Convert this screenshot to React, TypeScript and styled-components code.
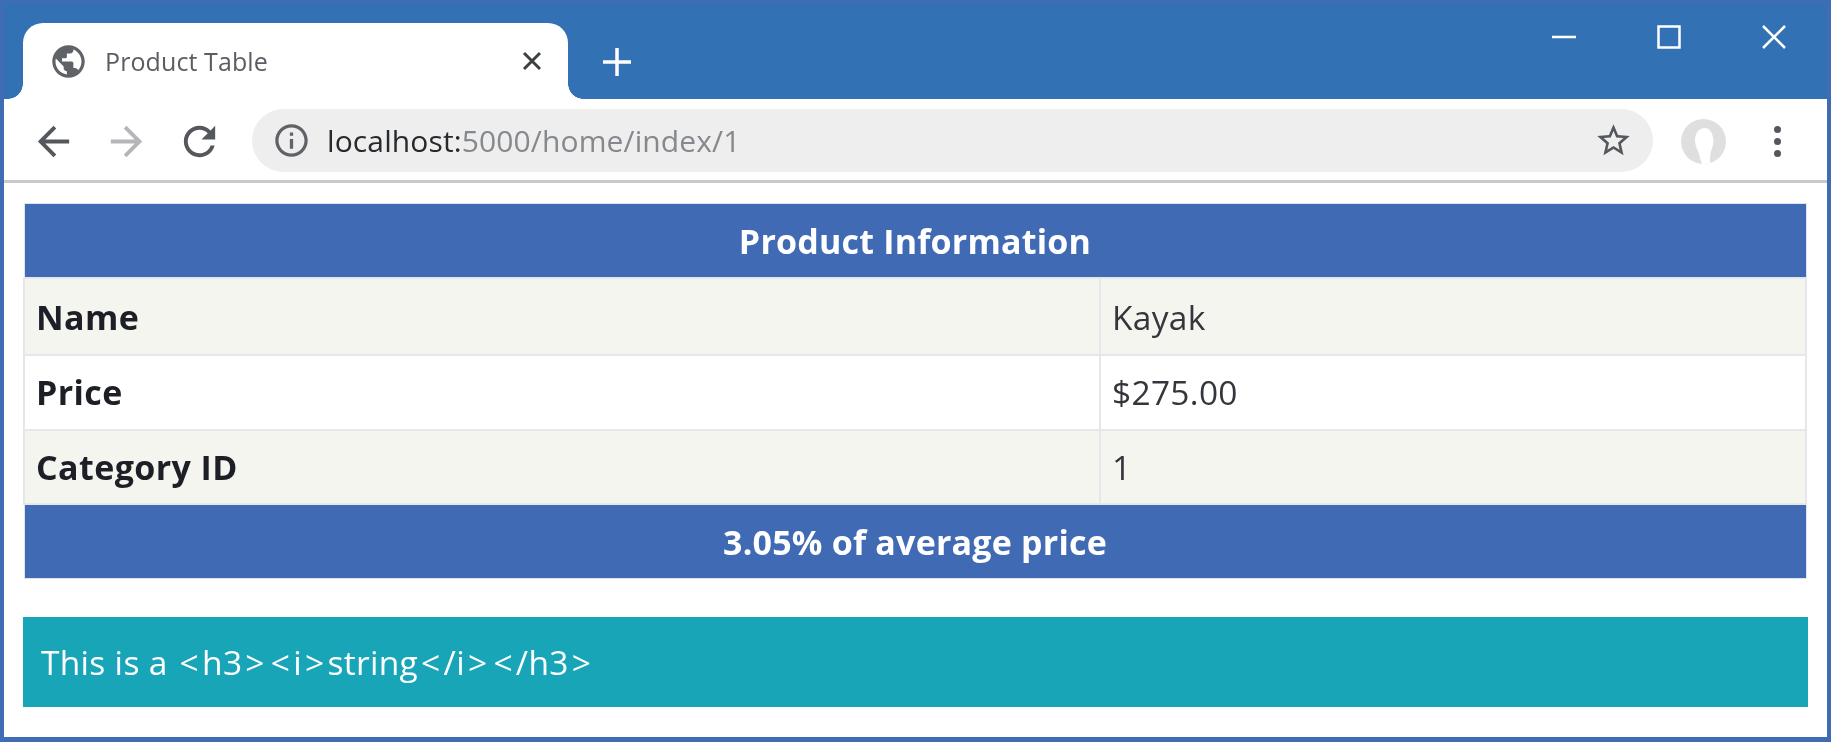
import React from "react";
import styled, { createGlobalStyle } from "styled-components";

const Global = createGlobalStyle`
  html, body { margin: 0; padding: 0; background: #fff; }
  body { font-family: "Open Sans", "Noto Sans", "Liberation Sans", sans-serif; overflow: hidden; }
`;

const Window = styled.div`
  box-sizing: border-box;
  width: 1831px;
  height: 742px;
  background: #fff;
  border: solid #3f6cb2;
  border-width: 3px 4px 5px 4px;
  display: flex;
  flex-direction: column;
  filter: blur(0.45px);
`;

const TitleBar = styled.div`
  height: 96px;
  flex: none;
  background: #3371b5;
  display: flex;
  align-items: flex-start;
  padding: 20px 0 0 19px;
  box-sizing: border-box;
`;

const Tab = styled.div`
  position: relative;
  width: 545px;
  height: 76px;
  background: #fff;
  border-radius: 20px 20px 0 0;
  display: flex;
  align-items: center;
  padding: 0 25px 0 26px;
  box-sizing: border-box;
  color: #5f6368;
  &::before, &::after {
    content: "";
    position: absolute;
    bottom: 0;
    width: 15px;
    height: 15px;
  }
  &::before {
    left: -15px;
    background: radial-gradient(circle at 0 0, #3371b5 14.5px, #fff 15px);
  }
  &::after {
    right: -15px;
    background: radial-gradient(circle at 100% 0, #3371b5 14.5px, #fff 15px);
  }
`;

const TabTitle = styled.span`
  flex: 1;
  margin-left: 17px;
  font-size: 25px;
  letter-spacing: 0.1px;
  color: #5a5e63;
  white-space: nowrap;
`;

const NewTab = styled.div`
  margin: 21px 0 0 35px;
  height: 36px;
  display: flex;
  align-items: center;
`;

const WindowControls = styled.div`
  margin-left: auto;
  display: flex;
  align-items: center;
  gap: 81px;
  padding: 2px 41px 0 0;
`;

const Toolbar = styled.div`
  height: 84px;
  flex: none;
  box-sizing: border-box;
  background: #fff;
  border-bottom: 3px solid #c8c9cb;
  display: flex;
  align-items: center;
  padding: 3px 0 0 0;
`;

const NavButtons = styled.div`
  display: flex;
  align-items: center;
  gap: 26px;
  padding-left: 26px;
  margin-right: 29px;
`;

const AddressBar = styled.div`
  width: 1401px;
  height: 63px;
  margin-top: -2px;
  border-radius: 32px;
  background: #eeeeef;
  display: flex;
  align-items: center;
  padding: 0 20px;
  box-sizing: border-box;
  flex: none;
`;

const Url = styled.div`
  flex: 1;
  margin-left: 16px;
  font-size: 30px;
  letter-spacing: 0.12px;
  color: #85888c;
  white-space: nowrap;
`;

const Host = styled.span`
  color: #26292d;
`;

const Profile = styled.div`
  margin-left: 28px;
  width: 45px;
  height: 45px;
  border-radius: 50%;
  background: #dfdfe0;
  overflow: hidden;
  flex: none;
`;

const Kebab = styled.div`
  margin-left: 48px;
  display: flex;
  flex-direction: column;
  gap: 5px;
`;

const Dot = styled.span`
  width: 7px;
  height: 7px;
  border-radius: 50%;
  background: #54585d;
`;

const Content = styled.div`
  padding: 20px 19px 0 19px;
`;

const InfoTable = styled.table`
  width: 1784px;
  border-collapse: collapse;
  table-layout: fixed;
  color: #212529;
`;

const ColA = styled.col`
  width: 1076px;
`;

const BandCell = styled.th`
  height: 73px;
  padding: 0;
  background: #406ab3;
  color: #fff;
  font-size: 34px;
  font-weight: 700;
  letter-spacing: 0.2px;
  text-align: center;
  border: 1px solid #dfe5ee;
`;

const Row = styled.tr<{ $striped?: boolean }>`
  background: ${(p) => (p.$striped ? "#f5f5f0" : "#ffffff")};
  &:first-child > * {
    height: 75px;
  }
`;

const HeadCell = styled.th`
  height: 72.5px;
  padding: 0 0 0 11px;
  text-align: left;
  font-size: 34px;
  font-weight: 700;
  letter-spacing: 0.4px;
  color: #1c1f26;
  border: 2.5px solid #e6e7eb;
`;

const ValueCell = styled.td`
  height: 72.5px;
  padding: 0 0 0 11px;
  font-size: 33.5px;
  letter-spacing: 0.3px;
  color: #33363b;
  border: 2.5px solid #e6e7eb;
`;

const Alert = styled.div`
  margin-top: 38px;
  height: 90px;
  width: 1785px;
  box-sizing: border-box;
  background: #18a5b8;
  color: #fff;
  display: flex;
  align-items: center;
  padding: 0 0 0 18px;
  font-size: 33.5px;
  letter-spacing: 0.3px;
  white-space: pre;
`;

const Bracket = styled.span`
  margin: 0 3px;
`;

const P = {
  back: "M20 11H7.83l5.59-5.59L12 4l-8 8 8 8 1.41-1.41L7.83 13H20v-2z",
  forward: "M4 11h12.17l-5.59-5.59L12 4l8 8-8 8-1.41-1.41L16.17 13H4v-2z",
  reload:
    "M17.65 6.35C16.2 4.9 14.21 4 12 4c-4.42 0-7.99 3.58-7.99 8s3.57 8 7.99 8c3.73 0 6.84-2.55 7.73-6h-2.08c-.82 2.33-3.04 4-5.65 4-3.31 0-6-2.69-6-6s2.69-6 6-6c1.66 0 3.14.69 4.22 1.78L13 11h7V4l-2.35 2.35z",
  info:
    "M11 7h2v2h-2zm0 4h2v6h-2zm1-9C6.48 2 2 6.48 2 12s4.48 10 10 10 10-4.48 10-10S17.52 2 12 2zm0 18c-4.41 0-8-3.59-8-8s3.59-8 8-8 8 3.59 8 8-3.59 8-8 8z",
  star:
    "M22 9.24l-7.19-.62L12 2 9.19 8.63 2 9.24l5.46 4.73L5.82 21 12 17.27 18.18 21l-1.63-7.03L22 9.24zM12 15.4l-3.76 2.27 1-4.28-3.32-2.88 4.38-.38L12 6.1l1.71 4.04 4.38.38-3.32 2.88 1 4.28L12 15.4z",
  globe:
    "M12 2C6.48 2 2 6.48 2 12s4.48 10 10 10 10-4.48 10-10S17.52 2 12 2zm-1 17.93c-3.95-.49-7-3.85-7-7.93 0-.62.08-1.21.21-1.79L9 15v1c0 1.1.9 2 2 2v1.93zm6.9-2.54c-.26-.81-1-1.39-1.9-1.39h-1v-3c0-.55-.45-1-1-1H8v-2h2c.55 0 1-.45 1-1V7h2c1.1 0 2-.9 2-2v-.41c2.93 1.19 5 4.06 5 7.41 0 2.08-.8 3.97-2.1 5.39z",
};

const Icon = ({ d, size, color }: { d: string; size: number; color: string }) => (
  <svg width={size} height={size} viewBox="0 0 24 24" fill={color} style={{ flex: "none", display: "block" }}>
    <path d={d} />
  </svg>
);

const Line = ({ d, w, h, color, sw }: { d: string; w: number; h: number; color: string; sw: number }) => (
  <svg width={w} height={h} viewBox={`0 0 ${w} ${h}`} fill="none" stroke={color} strokeWidth={sw} style={{ flex: "none", display: "block" }}>
    <path d={d} />
  </svg>
);

export default function App() {
  return (
    <>
      <Global />
      <Window>
        <TitleBar>
          <Tab>
            <Icon d={P.globe} size={39} color="#5f6368" />
            <TabTitle>Product Table</TabTitle>
            <Line d="M3 3L19 19M19 3L3 19" w={22} h={22} color="#3c4043" sw={3} />
          </Tab>
          <NewTab>
            <Line d="M14 0V28M0 14H28" w={28} h={28} color="#fff" sw={3.5} />
          </NewTab>
          <WindowControls>
            <Line d="M0 12H24" w={24} h={24} color="#fff" sw={2.5} />
            <Line d="M1.5 1.5H22.5V22.5H1.5Z" w={24} h={24} color="#fff" sw={2.5} />
            <Line d="M1 1L23 23M23 1L1 23" w={24} h={24} color="#fff" sw={2.5} />
          </WindowControls>
        </TitleBar>
        <Toolbar>
          <NavButtons>
            <Icon d={P.back} size={47} color="#54585d" />
            <Icon d={P.forward} size={47} color="#b4b6b9" />
            <Icon d={P.reload} size={47} color="#54585d" />
          </NavButtons>
          <AddressBar>
            <Icon d={P.info} size={39} color="#5f6368" />
            <Url>
              <Host>localhost:</Host>5000/home/index/1
            </Url>
            <Icon d={P.star} size={39} color="#54585d" />
          </AddressBar>
          <Profile>
            <svg width="45" height="45" viewBox="0 0 45 45" style={{ display: "block" }}>
              <path d="M24 9c-6 0-10 5-10 12 0 6 3 10 4 14 1 4 2 7 3 10h8c0-4 0-9 1-13 2-5 3-9 2-14-1-5-4-9-8-9z" fill="#fff" />
            </svg>
          </Profile>
          <Kebab>
            <Dot />
            <Dot />
            <Dot />
          </Kebab>
        </Toolbar>
        <Content>
          <InfoTable>
            <colgroup>
              <ColA />
              <col />
            </colgroup>
            <thead>
              <tr>
                <BandCell colSpan={2}>Product Information</BandCell>
              </tr>
            </thead>
            <tbody>
              <Row $striped>
                <HeadCell>Name</HeadCell>
                <ValueCell>Kayak</ValueCell>
              </Row>
              <Row>
                <HeadCell>Price</HeadCell>
                <ValueCell>$275.00</ValueCell>
              </Row>
              <Row $striped>
                <HeadCell>Category ID</HeadCell>
                <ValueCell>1</ValueCell>
              </Row>
            </tbody>
            <tfoot>
              <tr>
                <BandCell colSpan={2}>3.05% of average price</BandCell>
              </tr>
            </tfoot>
          </InfoTable>
          <Alert>
            This is a <Bracket>&lt;</Bracket>h3<Bracket>&gt;</Bracket><Bracket>&lt;</Bracket>i<Bracket>&gt;</Bracket>string<Bracket>&lt;</Bracket>/i<Bracket>&gt;</Bracket><Bracket>&lt;</Bracket>/h3<Bracket>&gt;</Bracket>
          </Alert>
        </Content>
      </Window>
    </>
  );
}
